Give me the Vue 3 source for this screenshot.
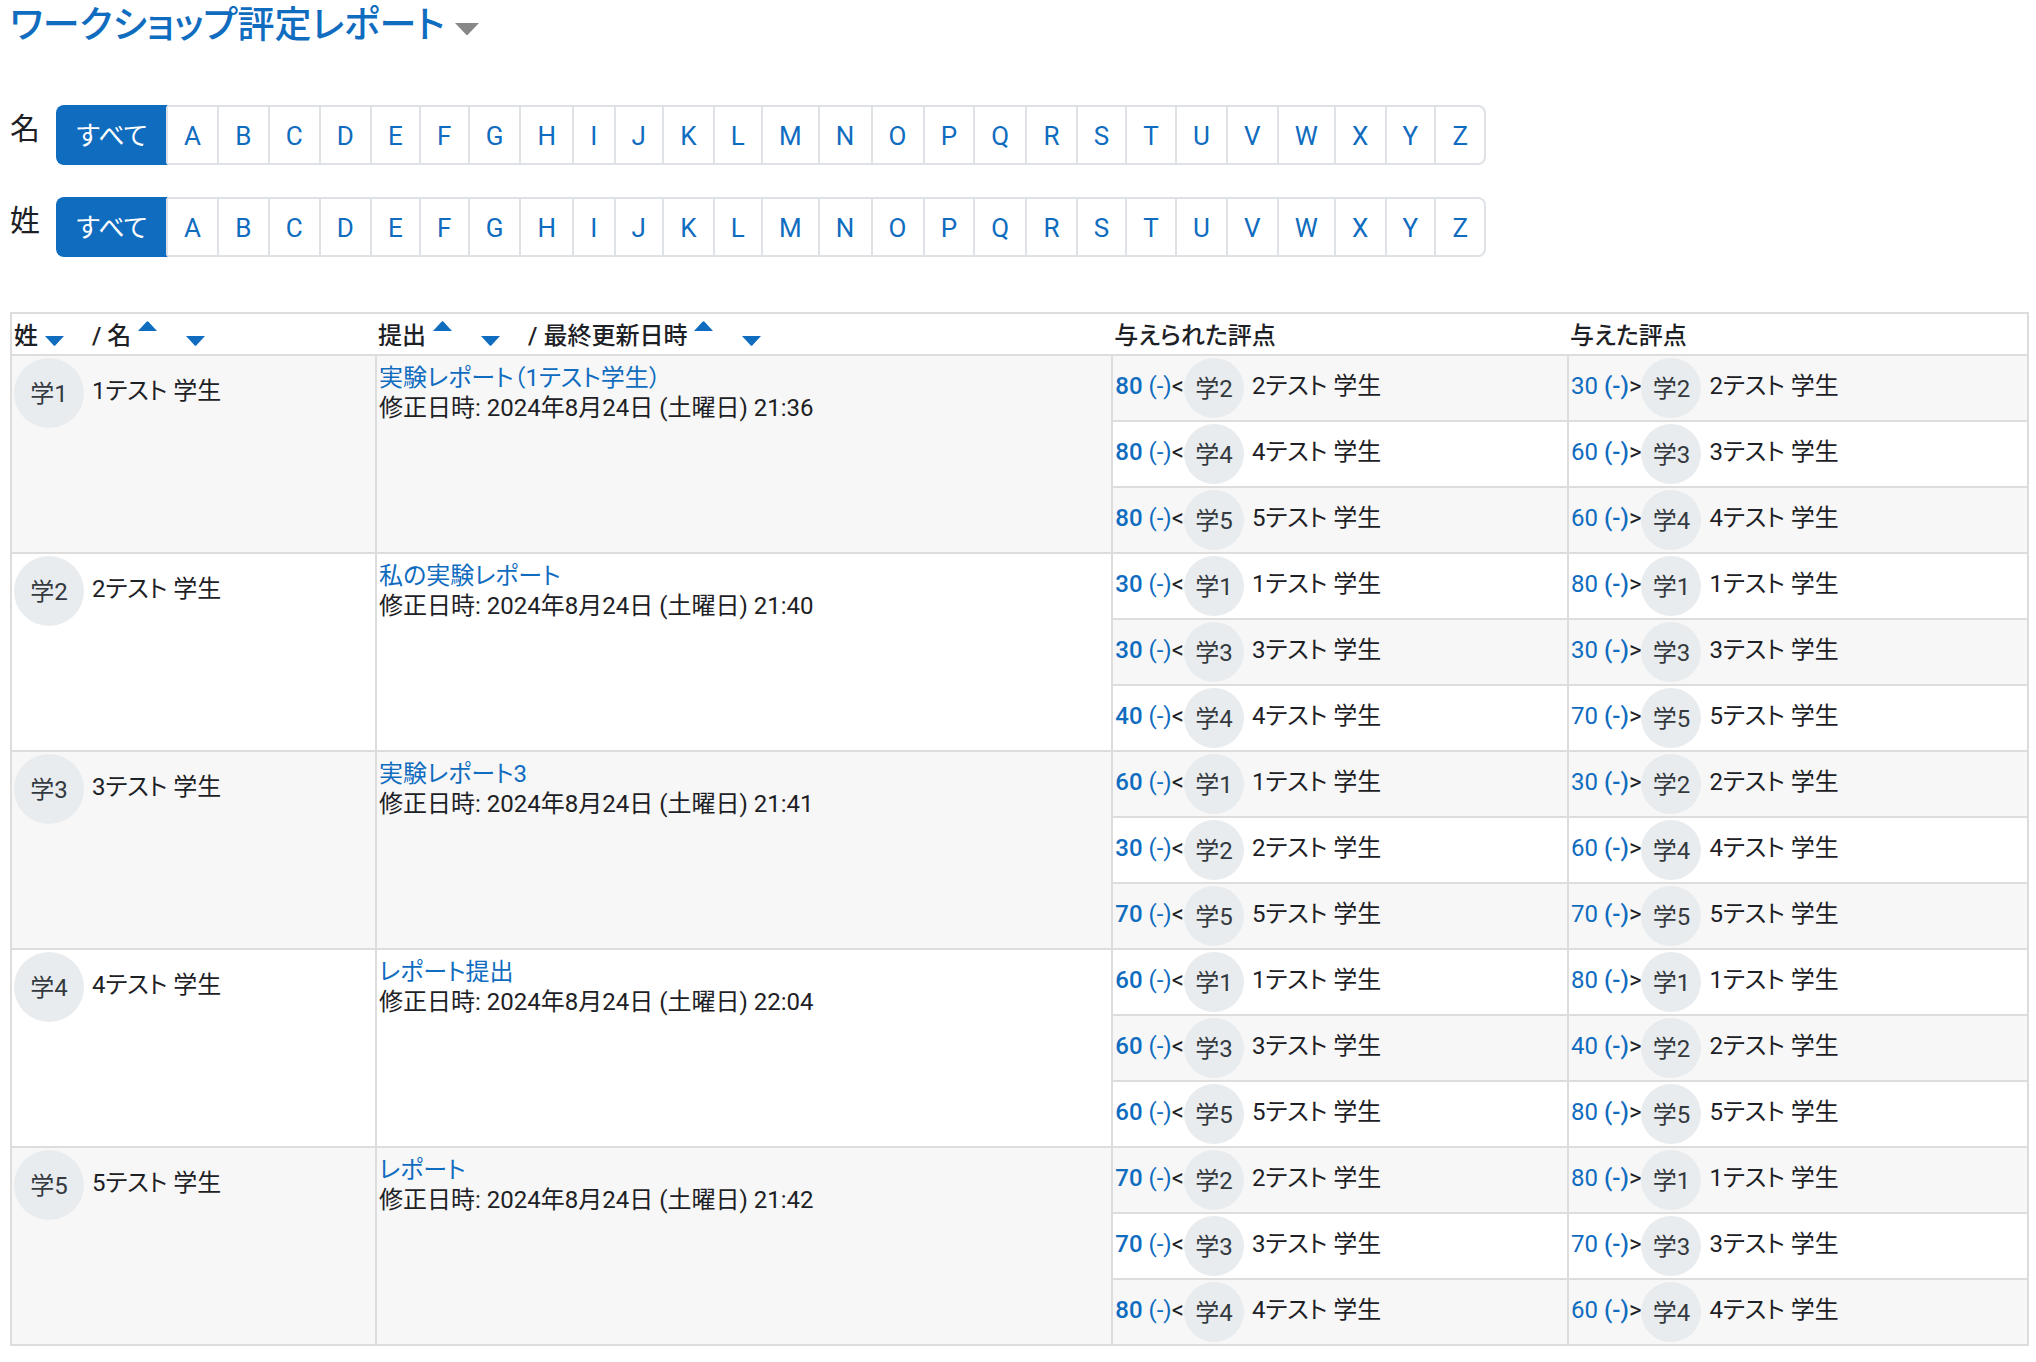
<script setup>
const letters = 'ABCDEFGHIJKLMNOPQRSTUVWXYZ'.split('')
const filters = ['名', '姓']

const day = '2024年8月24日 (土曜日)'

// Each review pair is [grade, student number].
const reports = [
  { no: 1, title: '実験レポート（1テスト学生）', time: '21:36', received: [[80, 2], [80, 4], [80, 5]], given: [[30, 2], [60, 3], [60, 4]] },
  { no: 2, title: '私の実験レポート', time: '21:40', received: [[30, 1], [30, 3], [40, 4]], given: [[80, 1], [30, 3], [70, 5]] },
  { no: 3, title: '実験レポート3', time: '21:41', received: [[60, 1], [30, 2], [70, 5]], given: [[30, 2], [60, 4], [70, 5]] },
  { no: 4, title: 'レポート提出', time: '22:04', received: [[60, 1], [60, 3], [60, 5]], given: [[80, 1], [40, 2], [80, 5]] },
  { no: 5, title: 'レポート', time: '21:42', received: [[70, 2], [70, 3], [80, 4]], given: [[80, 1], [70, 3], [60, 4]] },
]

const rows = reports.flatMap((report) =>
  report.received.map((received, i) => ({
    key: `${report.no}-${i}`,
    report: i === 0 ? report : null,
    span: report.received.length,
    received,
    given: report.given[i],
  })),
)

const sortGroups = [
  [
    { label: '姓', arrows: ['down'] },
    { label: '名', arrows: ['up', 'down'] },
  ],
  [
    { label: '提出', arrows: ['up', 'down'] },
    { label: '最終更新日時', arrows: ['up', 'down'] },
  ],
]
</script>

<template>
  <main class="page">
    <h2 class="title">
      <a href="#">ワークショップ評定レポート</a>
      <svg class="caret" viewBox="0 0 24 12" aria-hidden="true"><path d="M0 0H24L13 11.5Q12 12.500 11 11.500Z" /></svg>
    </h2>

    <nav v-for="name in filters" :key="name" class="initials" :aria-label="name">
      <span class="initials-label">{{ name }}</span>
      <ul class="letters">
        <li class="all"><a href="#" aria-current="true">すべて</a></li>
        <li v-for="letter in letters" :key="letter"><a href="#">{{ letter }}</a></li>
      </ul>
    </nav>

    <table class="report">
      <colgroup>
        <col class="col-name" />
        <col class="col-submission" />
        <col class="col-received" />
        <col />
      </colgroup>
      <thead>
        <tr>
          <th v-for="(group, g) in sortGroups" :key="g" scope="col">
            <div class="sorts">
              <template v-for="(item, i) in group" :key="item.label">
                <span :class="{ next: i > 0 }">{{ i > 0 ? '/ ' : '' }}{{ item.label }}</span>
                <a
                  v-for="arrow in item.arrows"
                  :key="arrow"
                  href="#"
                  :class="['sort', arrow]"
                  :aria-label="`${item.label} ${arrow === 'up' ? '昇順' : '降順'}`"
                >
                  <svg viewBox="0 0 19 10" aria-hidden="true">
                    <path v-if="arrow === 'up'" d="M0 10L8.500 0.800Q9.500 -0.200 10.500 0.800L19 10Z" />
                    <path v-else d="M0 0H19L10.500 9.200Q9.500 10.200 8.500 9.200Z" />
                  </svg>
                </a>
              </template>
            </div>
          </th>
          <th scope="col">与えられた評点</th>
          <th scope="col">与えた評点</th>
        </tr>
      </thead>
      <tbody>
        <tr v-for="row in rows" :key="row.key">
          <template v-if="row.report">
            <td :rowspan="row.span">
              <div class="person">
                <span class="avatar large">学{{ row.report.no }}</span>
                <span class="text">{{ row.report.no }}テスト 学生</span>
              </div>
            </td>
            <td :rowspan="row.span">
              <div class="submission">
                <a href="#">{{ row.report.title }}</a>
                <span>修正日時: {{ day }} {{ row.report.time }}</span>
              </div>
            </td>
          </template>
          <td>
            <div class="person">
              <span class="text"><a href="#"><b>{{ row.received[0] }}</b> (-)</a>&lt;</span>
              <span class="avatar">学{{ row.received[1] }}</span>
              <span class="text">{{ row.received[1] }}テスト 学生</span>
            </div>
          </td>
          <td>
            <div class="person">
              <span class="text"><a href="#">{{ row.given[0] }} <b>(-)</b></a>&gt;</span>
              <span class="avatar">学{{ row.given[1] }}</span>
              <span class="text">{{ row.given[1] }}テスト 学生</span>
            </div>
          </td>
        </tr>
      </tbody>
    </table>
  </main>
</template>

<style>
body {
  background: #fff;
}
</style>

<style scoped>
.page {
  padding: 0 7px 16px 10px;
  color: #1d2125;
  font-family: Roboto, 'Noto Sans CJK JP', sans-serif;
  font-size: 24px;
  line-height: 30px;
  font-feature-settings: 'palt';
}

a {
  color: #0f6cbf;
  text-decoration: none;
}

.title {
  display: flex;
  align-items: center;
  gap: 10px;
  margin: 0 0 53px;
  font-size: 37px;
  line-height: 52px;
  font-weight: 500;
}

.caret {
  width: 24px;
  height: 12px;
  margin-top: 6px;
  fill: #888;
}

.initials {
  display: flex;
  align-items: flex-start;
  gap: 16px;
  margin-bottom: 32px;
}

.initials-label {
  flex: none;
  width: 30px;
  font-size: 30px;
  line-height: 48px;
}

.letters {
  display: flex;
  width: 1430px;
  margin: 0;
  padding: 0;
  list-style: none;
  font-size: 26px;
}

.letters li {
  flex: 1 1 auto;
  border: 2px solid #dee2e6;
  border-left-width: 0;
  text-align: center;
}

.letters li:last-child {
  border-radius: 0 8px 8px 0;
}

.letters a {
  display: block;
  padding: 2px 16px 0;
  line-height: 54px;
}

.letters .all {
  flex: none;
  box-sizing: border-box;
  width: 112px;
  border-color: #0f6cbf;
  border-right-color: #dee2e6;
  border-left-width: 2px;
  border-radius: 8px 0 0 8px;
  background: #0f6cbf;
}

.letters .all a {
  color: #fff;
}

.report {
  width: 100%;
  margin-top: 55px;
  border: 2px solid #ddd;
  border-collapse: collapse;
  table-layout: fixed;
}

.col-name {
  width: 18.1%;
}

.col-submission {
  width: 36.5%;
}

.col-received {
  width: 22.6%;
}

th {
  height: 36px;
  padding: 4px 2px 0;
  font-weight: 500;
  text-align: left;
}

td {
  padding: 2px;
  border: 2px solid #ddd;
  vertical-align: top;
}

tbody tr:nth-child(odd) {
  background: #f7f7f7;
}

.sorts {
  display: flex;
  align-items: center;
}

.next {
  padding-left: 6px;
}

.sort {
  display: flex;
  width: 41px;
  height: 25px;
  padding-bottom: 6px;
  padding-left: 7px;
}

.sort.up {
  align-items: flex-start;
}

.sort.down {
  align-items: flex-end;
}

.sort svg {
  width: 19px;
  height: 10px;
  fill: #0f6cbf;
}

.person {
  display: flex;
  align-items: center;
}

.text {
  padding-bottom: 4px;
}

.person b {
  font-weight: 500;
}

.avatar {
  flex: none;
  box-sizing: border-box;
  width: 60px;
  height: 60px;
  padding-top: 1px;
  margin-right: 8px;
  border-radius: 50%;
  background: #e9ecef;
  color: #343a40;
  font-size: 24px;
  line-height: 60px;
  text-align: center;
}

.avatar.large {
  width: 70px;
  height: 70px;
  line-height: 70px;
}

.submission {
  display: flex;
  flex-direction: column;
  padding-top: 5px;
  line-height: 30px;
}
</style>
